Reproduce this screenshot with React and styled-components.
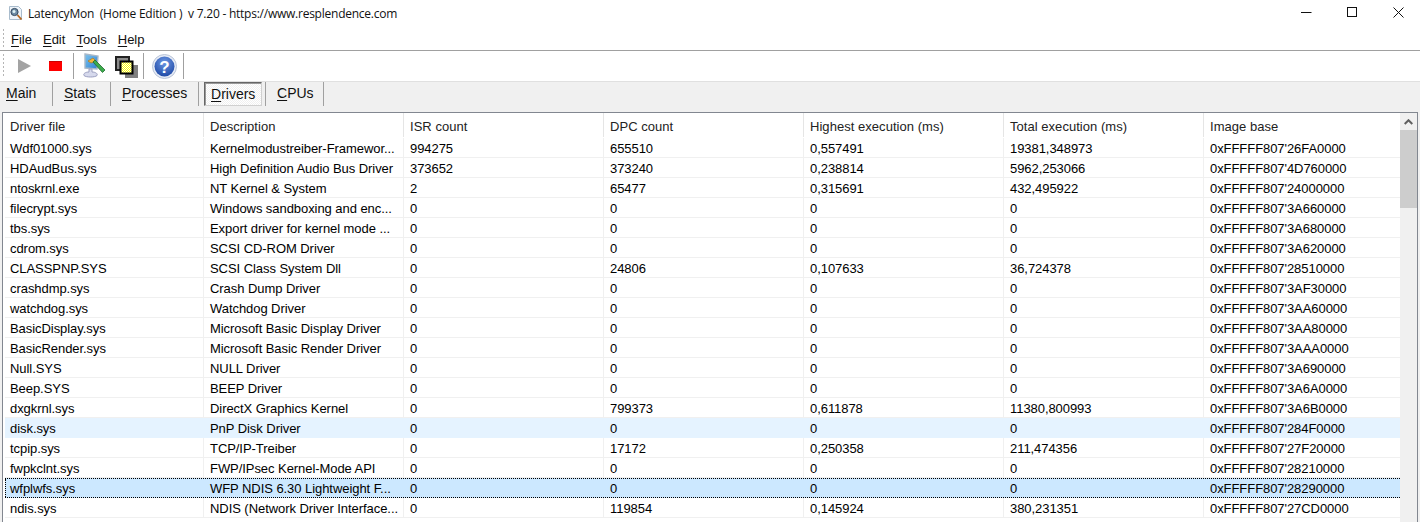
import React from "react";
import styled, { createGlobalStyle } from "styled-components";

const Global = createGlobalStyle`
  html, body { margin: 0; padding: 0; background: #fff; overflow: hidden; }
  #root { width: 1420px; height: 522px; }
`;

const Win = styled.div`
  width: 1420px; height: 522px; overflow: hidden; display: flex; flex-direction: column;
  background: #fff; color: #000; font-family: "Liberation Sans", Arial, sans-serif; font-size: 13px;
`;
const TitleBar = styled.div`
  height: 26px; flex: none; display: flex; align-items: center; padding-left: 8px;
`;
const AppIcon = styled.svg`width: 16px; height: 16px; margin-right: 4px; flex: none;`;
const TitleText = styled.span`
  font-family: "Open Sans", "Noto Sans", sans-serif; font-size: 12px; letter-spacing: -0.24px; white-space: pre; color: #111; flex: 1;
`;
const WinButton = styled.button`
  width: 46px; height: 25px; border: 0; background: none; padding: 0; display: flex; align-items: center; justify-content: center;
`;
const WinButtons = styled.div`display: flex; margin-right: -1px; align-self: flex-start;`;

const Grip = styled.div`
  width: 2px; align-self: stretch; margin: 3px 6px 3px 3px;
  background-image: linear-gradient(#b5b5b5 50%, transparent 50%); background-size: 1px 4px; background-repeat: repeat-y;
`;
const MenuBar = styled.div`
  height: 24px; flex: none; display: flex; align-items: center; border-bottom: 1px solid #a0a0a0; box-sizing: content-box;
`;
const MenuItem = styled.span`
  font-size: 13px; margin-right: ${p => p.$gap}px; color: #111; padding-top: 2px;
`;
const Mn = styled.span`text-decoration: underline; text-underline-offset: 2px;`;
const ToolBar = styled.div`
  height: 30px; flex: none; display: flex; align-items: center; border-bottom: 1px solid #e0e0e0;
`;
const ToolSep = styled.div`width: 1px; height: 26px; background: #a0a0a0; flex: none; margin-left: ${p => p.$ml}px;`;
const ToolIcon = styled.svg`flex: none; margin-left: ${p => p.$ml}px; margin-top: ${p => p.$mt || 0}px;`;

const TabBar = styled.div`
  height: 30px; flex: none; display: flex; align-items: flex-start; background: #f0f0f0;
`;
const Tab = styled.div`
  height: 24px; flex: none; box-sizing: border-box; width: ${p => p.$w}px; padding-left: ${p => p.$pl}px; line-height: 23px;
  font-size: 14px; color: #111; border-right: 1px solid #a0a0a0;
`;
const ActiveWrap = styled.div`
  height: 24px; width: 67px; flex: none; box-sizing: border-box; padding-left: 5px; border-right: 1px solid #a0a0a0;
`;
const ActiveTab = styled.div`
  width: 58px; height: 24px; box-sizing: border-box; padding-left: 6px; line-height: 23px;
  font-size: 14px; color: #111;
  border: 1px solid; border-color: #666 #d0d0d0 #d0d0d0 #666; box-shadow: inset 1px 1px 0 #999;
  background: repeating-conic-gradient(#fff 0 25%, #f0f0f0 0 50%) 0 0 / 2px 2px;
`;

const Content = styled.div`
  flex: 1; min-height: 0; background: #f0f0f0; padding: 0 2px; display: flex;
`;
const Panel = styled.div`
  flex: 1; min-width: 0; display: flex; background: #fff;
  border: 1px solid #828790; border-bottom: 0; overflow: hidden;
`;
const List = styled.div`flex: 1; min-width: 0; display: flex; flex-direction: column; letter-spacing: -0.06px;`;
const headCols = "201px 200px 200px 200px 200px 200px 196px";
const rowCols = "199px 200px 200px 200px 200px 200px 196px";
const HeaderRow = styled.div`display: grid; grid-template-columns: ${headCols}; height: 25px; flex: none; letter-spacing: 0.04px;`;
const HeaderCell = styled.div`
  padding-left: ${p => p.$first ? 7 : 6}px; line-height: 27px; height: 24px; box-sizing: border-box; color: #222; white-space: nowrap;
  border-right: 1px solid #e5e5e5; &:last-child { border-right: 0; }
`;
const Row = styled.div`
  display: grid; grid-template-columns: ${rowCols}; height: 20px; flex: none; box-sizing: border-box; margin-left: 2px;
  background: ${p => p.$sel ? "#cce8ff" : p.$hot ? "#e5f3ff" : "#fff"};
  border-bottom: ${p => p.$sel ? "1px dotted #000" : p.$hot ? "0" : "1px solid #f0f0f0"};
  border-top: ${p => p.$sel ? "1px dotted #000" : "0"};
`;
const Cell = styled.div`
  padding-left: ${p => p.$first ? 5 : 6}px; line-height: ${p => p.$sel ? 20 : 21}px; white-space: nowrap; overflow: hidden; color: #000;
  border-right: 1px solid ${p => p.$sel || p.$hot ? "transparent" : "#f0f0f0"}; &:last-child { border-right: 0; }
  ${p => p.$sel && p.$first ? "border-left: 1px dotted #000; padding-left: 4px;" : ""}
`;
const ScrollBar = styled.div`width: 17px; flex: none; background: #f0f0f0; display: flex; flex-direction: column;`;
const ScrollUp = styled.div`height: 17px; display: flex; align-items: center; justify-content: center;`;
const ScrollThumb = styled.div`height: 78px; background: #cdcdcd;`;

const heads = ["Driver file", "Description", "ISR count", "DPC count", "Highest execution (ms)", "Total execution (ms)", "Image base"];
const rows = [
  ["Wdf01000.sys", "Kernelmodustreiber-Framewor...", "994275", "655510", "0,557491", "19381,348973", "0xFFFFF807'26FA0000"],
  ["HDAudBus.sys", "High Definition Audio Bus Driver", "373652", "373240", "0,238814", "5962,253066", "0xFFFFF807'4D760000"],
  ["ntoskrnl.exe", "NT Kernel & System", "2", "65477", "0,315691", "432,495922", "0xFFFFF807'24000000"],
  ["filecrypt.sys", "Windows sandboxing and enc...", "0", "0", "0", "0", "0xFFFFF807'3A660000"],
  ["tbs.sys", "Export driver for kernel mode ...", "0", "0", "0", "0", "0xFFFFF807'3A680000"],
  ["cdrom.sys", "SCSI CD-ROM Driver", "0", "0", "0", "0", "0xFFFFF807'3A620000"],
  ["CLASSPNP.SYS", "SCSI Class System Dll", "0", "24806", "0,107633", "36,724378", "0xFFFFF807'28510000"],
  ["crashdmp.sys", "Crash Dump Driver", "0", "0", "0", "0", "0xFFFFF807'3AF30000"],
  ["watchdog.sys", "Watchdog Driver", "0", "0", "0", "0", "0xFFFFF807'3AA60000"],
  ["BasicDisplay.sys", "Microsoft Basic Display Driver", "0", "0", "0", "0", "0xFFFFF807'3AA80000"],
  ["BasicRender.sys", "Microsoft Basic Render Driver", "0", "0", "0", "0", "0xFFFFF807'3AAA0000"],
  ["Null.SYS", "NULL Driver", "0", "0", "0", "0", "0xFFFFF807'3A690000"],
  ["Beep.SYS", "BEEP Driver", "0", "0", "0", "0", "0xFFFFF807'3A6A0000"],
  ["dxgkrnl.sys", "DirectX Graphics Kernel", "0", "799373", "0,611878", "11380,800993", "0xFFFFF807'3A6B0000"],
  ["disk.sys", "PnP Disk Driver", "0", "0", "0", "0", "0xFFFFF807'284F0000"],
  ["tcpip.sys", "TCP/IP-Treiber", "0", "17172", "0,250358", "211,474356", "0xFFFFF807'27F20000"],
  ["fwpkclnt.sys", "FWP/IPsec Kernel-Mode API", "0", "0", "0", "0", "0xFFFFF807'28210000"],
  ["wfplwfs.sys", "WFP NDIS 6.30 Lightweight F...", "0", "0", "0", "0", "0xFFFFF807'28290000"],
  ["ndis.sys", "NDIS (Network Driver Interface...", "0", "119854", "0,145924", "380,231351", "0xFFFFF807'27CD0000"],
];

export default function App() {
  return (
    <Win>
      <Global />
      <TitleBar>
        <AppIcon viewBox="0 0 16 16">
          <path d="M1.5 1.5h9l3 3v10h-12z" fill="#eef4fa" stroke="#a9bccd" />
          <circle cx="6.5" cy="7" r="3.6" fill="#6f8ca6" stroke="#34495e" />
          <circle cx="6" cy="6.5" r="1.5" fill="#dff4f7" />
          <path d="M9.5 10l4 4.5" stroke="#b5651d" strokeWidth="1.8" />
        </AppIcon>
        <TitleText>LatencyMon  (Home Edition )  v 7.20 - https://www.resplendence.com</TitleText>
        <WinButtons>
          <WinButton aria-label="Minimize"><svg width="11" height="11"><path d="M0 5.5h10.5" stroke="#111" /></svg></WinButton>
          <WinButton aria-label="Maximize"><svg width="11" height="11"><rect x=".5" y=".5" width="9" height="9" fill="none" stroke="#111" /></svg></WinButton>
          <WinButton aria-label="Close"><svg width="11" height="11"><path d="M.5.5l10 10M10.5.5l-10 10" stroke="#111" /></svg></WinButton>
        </WinButtons>
      </TitleBar>
      <MenuBar>
        <Grip />
        <MenuItem $gap={11}><Mn>F</Mn>ile</MenuItem>
        <MenuItem $gap={11}><Mn>E</Mn>dit</MenuItem>
        <MenuItem $gap={11}><Mn>T</Mn>ools</MenuItem>
        <MenuItem $gap={0}><Mn>H</Mn>elp</MenuItem>
      </MenuBar>
      <ToolBar>
        <Grip />
        <ToolIcon $ml={7} width="13" height="14" viewBox="0 0 13 14"><path d="M0 0l13 7L0 14z" fill="#a3a3a3" /></ToolIcon>
        <ToolIcon $ml={18} width="13" height="10" viewBox="0 0 13 10"><rect width="13" height="10" fill="#fe0000" /><path d="M0 .5h13" stroke="#c00" /></ToolIcon>
        <ToolSep $ml={11} />
        <ToolIcon $ml={8} width="24" height="26" viewBox="0 0 24 26">
          <defs>
            <linearGradient id="scr" x1="0" y1="0" x2="1" y2="1"><stop offset="0" stopColor="#7cc4ee" /><stop offset="1" stopColor="#2f7fd0" /></linearGradient>
          </defs>
          <path d="M3 1l13 2-1 13-12-1z" fill="url(#scr)" stroke="#a8b8c8" strokeWidth="1.4" />
          <path d="M7 16v3c-4 0-6 2-5 3.5 2 2 11 2 13 0 1-1.5-1-3.5-5-3.5v-3z" fill="#d6d9ec" stroke="#9b9fc0" />
          <path d="M6 8l5-3 3 3-5 2z" fill="#f2b53a" stroke="#a87a1e" strokeWidth=".7" />
          <path d="M11 9l2-2 10 10-2.5 2.5z" fill="#3cac4c" stroke="#1f6a2e" strokeWidth=".8" />
        </ToolIcon>
        <ToolIcon $ml={9} $mt={1} width="23" height="22" viewBox="0 0 23 22">
          <defs>
            <pattern id="dith" width="2" height="2" patternUnits="userSpaceOnUse">
              <rect width="2" height="2" fill="#ffff00" /><rect width="1" height="1" fill="#fff" /><rect x="1" y="1" width="1" height="1" fill="#fff" />
            </pattern>
          </defs>
          <rect x="1" y="1" width="13" height="13" fill="#8c8c8c" stroke="#222" strokeWidth="2" />
          <rect x="10" y="9" width="13" height="13" fill="#808080" />
          <rect x="5.5" y="5.5" width="12" height="12" fill="url(#dith)" stroke="#000" strokeWidth="2" />
        </ToolIcon>
        <ToolSep $ml={5} />
        <ToolIcon $ml={8} width="25" height="25" viewBox="0 0 25 25">
          <defs>
            <radialGradient id="hb" cx=".5" cy=".3" r=".8"><stop offset="0" stopColor="#6d97e3" /><stop offset="1" stopColor="#143f9e" /></radialGradient>
          </defs>
          <circle cx="12.5" cy="12.5" r="12" fill="#e6ebf5" stroke="#b9c4d8" />
          <circle cx="12.5" cy="12.5" r="10" fill="url(#hb)" />
          <text x="12.5" y="18.5" textAnchor="middle" fontFamily="Liberation Sans" fontWeight="700" fontSize="17" fill="#fff">?</text>
        </ToolIcon>
        <ToolSep $ml={6} />
      </ToolBar>
      <TabBar>
        <Tab $w={53} $pl={6}><Mn>M</Mn>ain</Tab>
        <Tab $w={58} $pl={11}><Mn>S</Mn>tats</Tab>
        <Tab $w={88} $pl={11}><Mn>P</Mn>rocesses</Tab>
        <ActiveWrap><ActiveTab><Mn>D</Mn>rivers</ActiveTab></ActiveWrap>
        <Tab $w={58} $pl={11}><Mn>C</Mn>PUs</Tab>
      </TabBar>
      <Content>
        <Panel>
          <List>
            <HeaderRow>{heads.map((h, j) => <HeaderCell key={h} $first={j === 0}>{h}</HeaderCell>)}</HeaderRow>
            {rows.map((r, i) => {
              const sel = i === 17, hot = i === 14;
              return (
                <Row key={r[0]} $sel={sel} $hot={hot}>
                  {r.map((c, j) => <Cell key={j} $first={j === 0} $sel={sel} $hot={hot}>{c}</Cell>)}
                </Row>
              );
            })}
          </List>
          <ScrollBar>
            <ScrollUp><svg width="9" height="6"><path d="M.7 5L4.5 1.2 8.3 5" fill="none" stroke="#606060" strokeWidth="2" /></svg></ScrollUp>
            <ScrollThumb />
          </ScrollBar>
        </Panel>
      </Content>
    </Win>
  );
}
